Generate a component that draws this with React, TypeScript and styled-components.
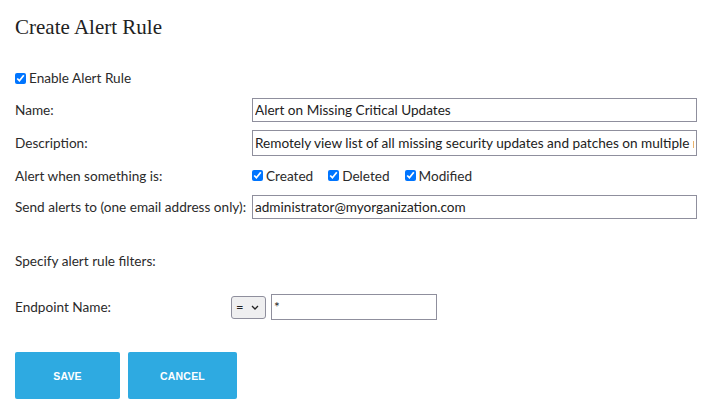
import React from "react";
import styled, { createGlobalStyle } from "styled-components";

const Global = createGlobalStyle`
  html, body { margin: 0; padding: 0; background: #fff; }
  body { font-family: Lato, "Liberation Sans", sans-serif; font-size: 13.6px; color: #2b2b2b; }
`;

const Page = styled.div`
  padding: 10px 9px 0 15px;
  width: 706px;
  box-sizing: border-box;
`;

const Title = styled.h1`
  font-family: "Liberation Serif", "DejaVu Serif", serif;
  font-weight: 400;
  font-size: 21px;
  color: #222;
  margin: 5px 0 0 0;
  line-height: 24px;
`;

const CheckLabel = styled.label`
  display: inline-flex;
  align-items: center;
  gap: 3px;
  line-height: 16px;
  white-space: nowrap;
`;

const Box = styled.input.attrs({ type: "checkbox" })`
  width: 11px;
  height: 11px;
  margin: 0;
  accent-color: #0075ff;
`;

const EnableRow = styled.div`
  margin-top: 31px;
  height: 16px;
  display: flex;
  align-items: center;
`;

const FormGrid = styled.div<{ $label: number }>`
  display: grid;
  grid-template-columns: ${(p) => p.$label}px 1fr;
  row-gap: 8px;
  align-items: center;
`;

const MainGrid = styled(FormGrid)`
  margin-top: 12px;
`;

const Label = styled.div`
  white-space: nowrap;
  line-height: 16px;
`;

const TextInput = styled.input<{ $w?: number; $h?: number }>`
  box-sizing: border-box;
  width: ${(p) => (p.$w ? `${p.$w}px` : "100%")};
  height: ${(p) => p.$h ?? 24}px;
  border: 1px solid #8f8f9d;
  border-radius: 0;
  padding: 0 2px;
  font-family: inherit;
  font-size: 13.6px;
  color: #222;
  background: #fff;
  outline: none;
`;

const CheckGroup = styled.div`
  display: flex;
  align-items: center;
  gap: 15px;
  height: 23px;
`;

const Section = styled.div`
  margin-top: 34px;
  line-height: 16px;
`;

const FilterGrid = styled(FormGrid)`
  margin-top: 25px;
`;

const FilterControls = styled.div`
  display: flex;
  align-items: center;
  gap: 5px;
`;

const Select = styled.div`
  box-sizing: border-box;
  width: 35px;
  height: 23px;
  border: 1px solid #8f8f9d;
  border-radius: 3px;
  background: #efeff0;
  display: flex;
  align-items: center;
  justify-content: space-between;
  padding: 0 6px 0 4px;
  font-size: 13px;
  color: #222;
`;

const Buttons = styled.div`
  margin-top: 32px;
  display: flex;
  gap: 8px;
`;

const Button = styled.button`
  min-width: 105px;
  height: 47px;
  padding: 0 32px;
  border: none;
  border-radius: 2px;
  background: #2eaae1;
  color: #fff;
  font-family: "Liberation Sans", Arial, sans-serif;
  font-weight: 700;
  font-size: 10.5px;
  letter-spacing: 0.2px;
  text-transform: uppercase;
`;

export default function App() {
  return (
    <Page>
      <Global />
      <Title>Create Alert Rule</Title>
      <EnableRow>
        <CheckLabel>
          <Box defaultChecked />
          Enable Alert Rule
        </CheckLabel>
      </EnableRow>
      <MainGrid $label={237}>
        <Label>Name:</Label>
        <TextInput defaultValue="Alert on Missing Critical Updates" />
        <Label>Description:</Label>
        <TextInput
          $h={26}
          defaultValue="Remotely view list of all missing security updates and patches on multiple remote computers"
        />
        <Label>Alert when something is:</Label>
        <CheckGroup>
          <CheckLabel>
            <Box defaultChecked />
            Created
          </CheckLabel>
          <CheckLabel>
            <Box defaultChecked />
            Deleted
          </CheckLabel>
          <CheckLabel>
            <Box defaultChecked />
            Modified
          </CheckLabel>
        </CheckGroup>
        <Label>Send alerts to (one email address only):</Label>
        <TextInput defaultValue="administrator@myorganization.com" />
      </MainGrid>
      <Section>Specify alert rule filters:</Section>
      <FilterGrid $label={216}>
        <Label>Endpoint Name:</Label>
        <FilterControls>
          <Select>
            <span>=</span>
            <svg width="8" height="5" viewBox="0 0 8 5">
              <path d="M1 1l3 3 3-3" fill="none" stroke="#222" strokeWidth="1.3" />
            </svg>
          </Select>
          <TextInput $w={166} $h={26} defaultValue="*" />
        </FilterControls>
      </FilterGrid>
      <Buttons>
        <Button>Save</Button>
        <Button>Cancel</Button>
      </Buttons>
    </Page>
  );
}
